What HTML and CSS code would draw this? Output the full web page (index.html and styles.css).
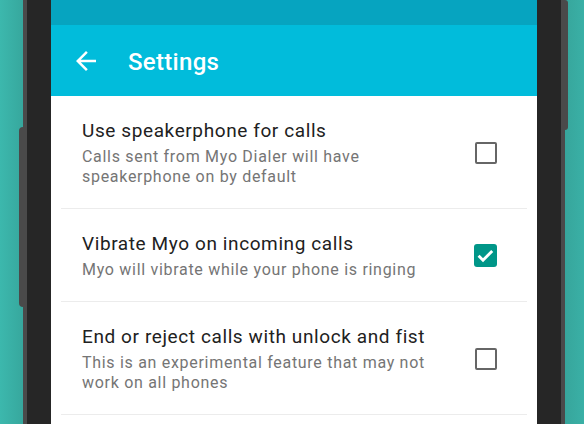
FILE: index.html
```html
<!DOCTYPE html>
<html>
<head>
<meta charset="utf-8">
<link rel="stylesheet" href="styles.css">
</head>
<body>
<div class="stage">
  <div class="phone">
    <span class="btn btn-left"></span>
    <span class="btn btn-right"></span>
    <div class="screen">
      <div class="statusbar"></div>
      <div class="appbar">
        <svg class="back" viewBox="0 0 24 24" width="30" height="30"><path fill="#fff" d="M20 11H7.83l5.59-5.59L12 4l-8 8 8 8 1.41-1.41L7.83 13H20v-2z"/></svg>
        <span class="title">Settings</span>
      </div>
      <div class="list">
        <div class="row">
          <div class="text">
            <div class="row-title">Use speakerphone for calls</div>
            <div class="row-sub">Calls sent from Myo Dialer will have speakerphone on by default</div>
          </div>
          <span class="check"></span>
        </div>
        <div class="row">
          <div class="text">
            <div class="row-title">Vibrate Myo on incoming calls</div>
            <div class="row-sub">Myo will vibrate while your phone is ringing</div>
          </div>
          <span class="check checked"><svg viewBox="0 0 24 24" width="23" height="23"><path fill="none" stroke="#fff" stroke-width="3" d="M4.8 12.3l4.6 4.6 9.6-9.6"/></svg></span>
        </div>
        <div class="row">
          <div class="text">
            <div class="row-title">End or reject calls with unlock and fist</div>
            <div class="row-sub">This is an experimental feature that may not work on all phones</div>
          </div>
          <span class="check"></span>
        </div>
      </div>
    </div>
  </div>
</div>
</body>
</html>
```

FILE: styles.css
```css
html, body {
  margin: 0;
  padding: 0;
}
body {
  width: 584px;
  height: 424px;
  overflow: hidden;
  font-family: Roboto, "Noto Sans", sans-serif;
  background: linear-gradient(90deg, #3cb8ad 0px, #37a89e 22px, #37a69c 566px, #3ab0a6 584px);
}
.stage {
  display: flex;
  height: 424px;
  padding-left: 23px;
}
.phone {
  position: relative;
  box-sizing: border-box;
  width: 542px;
  height: 424px;
  border-left: 4px solid #4a4a4a;
  border-right: 4px solid #4a4a4a;
  background: #262626;
  display: flex;
  padding: 0 24px;
}
.btn {
  position: absolute;
  width: 4px;
  background: #4a4a4a;
}
.btn-left {
  left: -8px;
  top: 127px;
  height: 180px;
  border-radius: 4px 0 0 4px;
}
.btn-right {
  right: -7px;
  top: 0;
  height: 130px;
  width: 3px;
  border-radius: 0 3px 3px 0;
}
.screen {
  width: 486px;
  height: 424px;
  background: #fff;
  display: flex;
  flex-direction: column;
}
.statusbar {
  height: 25px;
  background: #06a4c0;
}
.appbar {
  height: 71px;
  background: #01bcdb;
  display: flex;
  align-items: center;
  padding-left: 20px;
}
.back {
  display: block;
  margin-top: 1px;
}
.title {
  color: #fff;
  font-size: 24px;
  font-weight: 500;
  letter-spacing: 0.3px;
  margin-left: 27px;
  margin-top: 2px;
}
.list {
  padding: 0 10px;
}
.row {
  display: flex;
  align-items: center;
  padding: 22px 30px 21px 21px;
  border-bottom: 1px solid #ececec;
}
.text {
  flex: 1;
}
.row-title {
  font-size: 19px;
  line-height: 25px;
  letter-spacing: 0.6px;
  color: #212121;
}
.row-sub {
  font-size: 16px;
  line-height: 20px;
  letter-spacing: 0.7px;
  color: #757575;
  margin-top: 4px;
  max-width: 360px;
}
.check {
  width: 22px;
  height: 22px;
  box-sizing: border-box;
  border: 2.5px solid #666;
  border-radius: 2px;
  margin-left: 10px;
  flex: none;
}
.check.checked {
  width: 23px;
  height: 23px;
  border: none;
  background: #009688;
  border-radius: 3px;
}
.check svg {
  display: block;
}
```
